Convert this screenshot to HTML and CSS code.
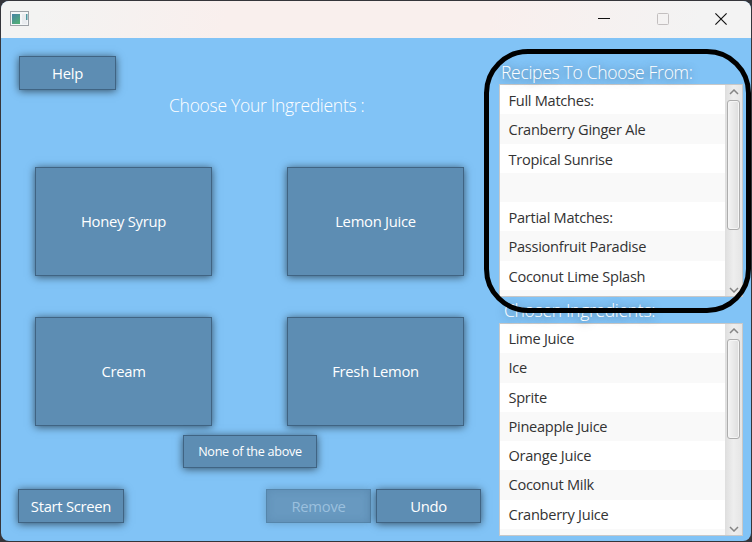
FILE: index.html
```html
<!DOCTYPE html>
<html lang="en">
<head>
<meta charset="utf-8">
<title>Ingredients</title>
<link rel="stylesheet" href="styles.css">
</head>
<body>
<div class="window">
  <header class="titlebar">
    <svg class="app-icon" width="19" height="15" viewBox="0 0 19 15">
      <defs><linearGradient id="g" x1="0" y1="0" x2="0.6" y2="1"><stop offset="0" stop-color="#4782a5"/><stop offset="1" stop-color="#51ad78"/></linearGradient></defs>
      <rect x=".5" y=".5" width="18" height="14" fill="#f5f7f8" stroke="#9da2a7"/>
      <rect x="2" y="3" width="8" height="10" fill="url(#g)"/>
      <rect x="12" y="3" width="5" height="10" fill="#e9ecef"/>
      <rect x="16" y="3" width="1.5" height="6" fill="#5098a0"/>
    </svg>
    <div class="controls">
      <svg width="12" height="12" viewBox="0 0 12 12"><path d="M0 5.5H12" stroke="#111"/></svg>
      <svg width="12" height="12" viewBox="0 0 12 12"><rect x=".5" y=".5" width="11" height="11" rx="1" fill="none" stroke="#c3bfbf"/></svg>
      <svg width="12" height="12" viewBox="0 0 12 12"><path d="M.4 .4L11.6 11.6M11.6 .4L.4 11.6" stroke="#111" stroke-width="1.15"/></svg>
    </div>
  </header>
  <main class="content">
    <section class="picker">
      <button class="btn help">Help</button>
      <h1 class="title">Choose Your Ingredients :</h1>
      <div class="cards">
        <button class="btn">Honey Syrup</button>
        <button class="btn">Lemon Juice</button>
        <button class="btn">Cream</button>
        <button class="btn">Fresh Lemon</button>
      </div>
      <button class="btn none">None of the above</button>
      <div class="actions">
        <button class="btn start">Start Screen</button>
        <button class="btn remove" disabled>Remove</button>
        <button class="btn">Undo</button>
      </div>
    </section>
    <aside class="side">
      <h2 class="heading">Recipes To Choose From:</h2>
      <div class="list">
        <ul><li>Full Matches:</li><li>Cranberry Ginger Ale</li><li>Tropical Sunrise</li><li></li><li>Partial Matches:</li><li>Passionfruit Paradise</li><li>Coconut Lime Splash</li><li></li></ul>
        <div class="scroll">
          <svg width="10" height="6" viewBox="0 0 10 6"><path d="M1 5L5 1L9 5"/></svg>
          <div class="thumb"></div>
          <svg class="down" width="10" height="6" viewBox="0 0 10 6"><path d="M1 1L5 5L9 1"/></svg>
        </div>
      </div>
      <h2 class="heading chosen">Chosen Ingredients:</h2>
      <div class="list">
        <ul><li>Lime Juice</li><li>Ice</li><li>Sprite</li><li>Pineapple Juice</li><li>Orange Juice</li><li>Coconut Milk</li><li>Cranberry Juice</li><li></li></ul>
        <div class="scroll">
          <svg width="10" height="6" viewBox="0 0 10 6"><path d="M1 5L5 1L9 5"/></svg>
          <div class="thumb short"></div>
          <svg class="down" width="10" height="6" viewBox="0 0 10 6"><path d="M1 1L5 5L9 1"/></svg>
        </div>
      </div>
    </aside>
  </main>
</div>
<div class="outline"></div>
</body>
</html>
```
FILE: styles.css
```css
* { box-sizing: border-box; margin: 0; padding: 0; }
body { width: 752px; height: 542px; padding: 1px; overflow: hidden; background: #35353a; font-family: "Open Sans", "Noto Sans", sans-serif; font-size: 14.6px; letter-spacing: -.28px; }
.window { width: 750px; height: 540px; border-radius: 8px; overflow: hidden; background: #81c3f6; }
.titlebar { height: 37px; display: flex; justify-content: space-between; padding: 10px 24px 0 9px; background: linear-gradient(100deg, #f3f3f2 5%, #f9efed 30%, #f9efed 65%, #f3f3f3 93%); }
.controls { display: flex; gap: 46.5px; padding-top: 2px; }
.content { display: flex; height: 503px; }
.picker { width: 498px; padding: 18px 17px 0 17px; display: flex; flex-direction: column; }
.btn { font: inherit; font-size: 14.8px; letter-spacing: -.28px; padding-bottom: 1px; color: #fff; background: #5d8db3; border: 1px solid #406483; box-shadow: 0 1px 8px rgba(0,0,0,.6); white-space: nowrap; }
.help { width: 97px; height: 34px; margin-left: 1px; }
.title { font-size: 17.5px; font-weight: 350; letter-spacing: -.28px; line-height: 24px; color: #fff; width: 200px; margin: 3px 0 50px 151px; white-space: nowrap; }
.cards { display: grid; grid-template-columns: 177px 177px; grid-auto-rows: 109px; gap: 41px 75px; margin-left: 17px; }
.none { width: 134px; height: 33px; margin: 9px 0 21px 165px; font-size: 12.6px; }
.actions { display: flex; gap: 5px; height: 34px; }
.actions .btn { width: 105px; padding-bottom: 0; }
.actions .start { width: 106px; margin-right: 137px; }
.btn.remove { background: #6899c0; border-color: #5585aa; color: #9bc0de; box-shadow: 0 0 8px rgba(0,0,0,.2), inset 0 0 8px rgba(50,95,135,.2); }
.side { width: 244px; padding-top: 22px; }
.heading { font-size: 17.5px; font-weight: 350; letter-spacing: -.3px; line-height: 24px; color: #fff; padding-left: 2px; text-shadow: 0 1px 9px rgba(0,0,0,.5); white-space: nowrap; }
.chosen { padding-left: 5px; line-height: 26px; }
.list { height: 213px; border: 1px solid #c8c8c8; display: flex; background: #fff; overflow: hidden; }
.list ul { list-style: none; flex: 1; }
.list li { height: 29.25px; line-height: 30px; padding-left: 8.5px; color: #333; }
.chosen + .list li { line-height: 29px; }
.list li:nth-child(even) { background: #f9f9f9; }
.scroll { width: 17px; padding: 4px 0 3px; display: flex; flex-direction: column; align-items: center; background: linear-gradient(90deg, #dedede, #eee 50%, #e5e5e5); }
.scroll path { fill: none; stroke: #858585; stroke-width: 1.5; }
.thumb { width: 13px; height: 130px; margin-top: 5px; border: 1px solid #adadad; border-radius: 3px; background: linear-gradient(90deg, #f4f4f4, #dedede); box-shadow: inset 0 0 0 1px #f5f5f5; }
.short { height: 100px; }
.down { margin-top: auto; }
.outline { position: absolute; left: 484px; top: 49px; width: 267px; height: 264px; border: 5px solid #000; border-radius: 44px; }
```
